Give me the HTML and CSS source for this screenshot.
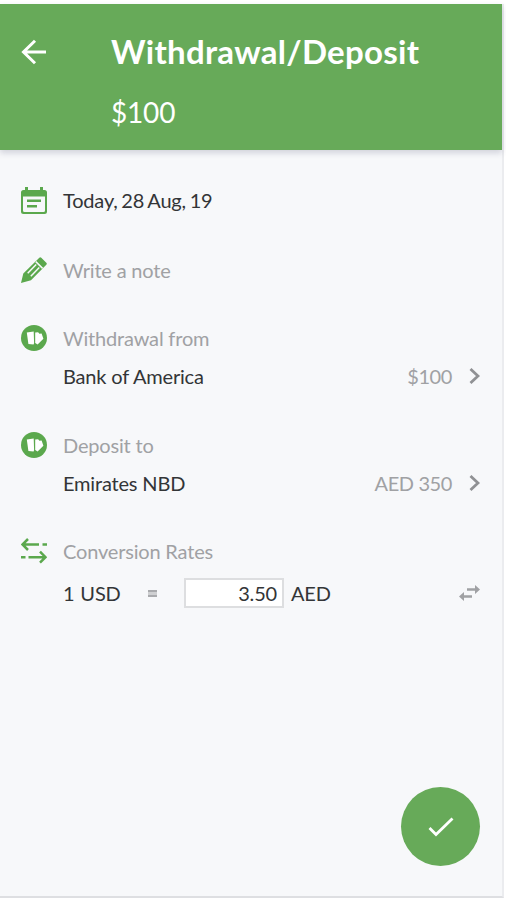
FILE: index.html
```html
<!DOCTYPE html>
<html lang="en">
<head>
	<meta charset="UTF-8">
	<title>Withdrawal/Deposit</title>
	<link rel="stylesheet" href="styles.css">
</head>
<body>
	<div class="screen">
		<!-- header -->
		<div class="header">
			<svg class="back" width="26" height="26" viewBox="0 0 26 26"><path d="M14 1.800L2.500 13l11.500 11.200M2.500 13H25"/></svg>
			<div class="heading">
				<h1>Withdrawal/Deposit</h1>
				<p class="total">$100</p>
			</div>
		</div>

		<!-- form -->
		<div class="content">
			<div class="item date">
				<svg class="icon" width="26" height="28" viewBox="0 0 26 28">
					<path class="fill" fill-rule="evenodd" d="M4 0h3v3h12V0h3v3h1.500a2.500 2.500 0 0 1 2.500 2.500v19a2.500 2.500 0 0 1-2.500 2.500h-21A2.500 2.500 0 0 1 0 24.500v-19A2.500 2.500 0 0 1 2.500 3H4zM2 9.500v14q0 1.500 1.500 1.500h19q1.500 0 1.500-1.500v-14z"/>
					<path class="line" d="M6 13.800h14M6 19.200h10"/>
				</svg>
				<div class="text">Today, 28 Aug, 19</div>
			</div>
			<div class="item note">
				<svg class="icon" width="26" height="26" viewBox="0 0 26 26">
					<path class="fill" d="M18.300.7q1-1 2 0l5 5q1 1 0 2L10 23.300 0 26l2.300-9.500z"/>
					<path class="gap" d="M14.800 4.600l6.800 6.800M6.700 16.300l8.500-8.700M9.800 19.300l8.500-8.700"/>
				</svg>
				<div class="text label">Write a note</div>
			</div>
			<div class="item from">
				<svg class="icon" width="26" height="26" viewBox="0 0 26 26">
					<circle class="fill" cx="13" cy="13" r="13"/>
					<path class="card" d="M5.800 7.500l6.900-.9.400 11.400-.5 1.500-5.200-.6zM14.200 7.500l2.900-.3 1.300 1.600 2.200-.4 1.800 5.400-5.800 5.800-2.400-1.600z"/>
				</svg>
				<div class="text label">Withdrawal from</div>
				<div class="account">
					<span>Bank of America</span>
					<span class="amount">$100</span>
					<svg class="chevron" width="11" height="18" viewBox="0 0 11 18"><path d="M1.500 2l7.500 7-7.500 7"/></svg>
				</div>
			</div>
			<div class="item to">
				<svg class="icon" width="26" height="26" viewBox="0 0 26 26">
					<circle class="fill" cx="13" cy="13" r="13"/>
					<path class="card" d="M5.800 7.500l6.900-.9.400 11.400-.5 1.500-5.200-.6zM14.200 7.500l2.900-.3 1.300 1.600 2.200-.4 1.800 5.400-5.800 5.800-2.400-1.600z"/>
				</svg>
				<div class="text label">Deposit to</div>
				<div class="account">
					<span>Emirates NBD</span>
					<span class="amount">AED 350</span>
					<svg class="chevron" width="11" height="18" viewBox="0 0 11 18"><path d="M1.500 2l7.500 7-7.500 7"/></svg>
				</div>
			</div>
			<div class="item rates">
				<svg class="icon" width="26" height="26" viewBox="0 0 26 26">
					<path class="line" d="M7 1L1.500 6.500 7 12M2 6.500h16M21.500 6.500H26M19 13.700l5.500 5.500-5.500 5.500M24 19.200H7.500M0 19.200h4.500"/>
				</svg>
				<div class="text label">Conversion Rates</div>
				<div class="rate">
					<span class="base">1 USD</span>
					<span class="equal"></span>
					<input type="text" value="3.50">
					<span>AED</span>
					<svg class="swap" width="21" height="16" viewBox="0 0 21 16">
						<path class="shaft" d="M8 4.500h9M4 11.500h9"/>
						<path class="head" d="M16 0l5 4.500L16 9zM5 7l-5 4.500L5 16z"/>
					</svg>
				</div>
			</div>
		</div>

		<button class="done">
			<svg width="26" height="20" viewBox="0 0 26 20"><path d="M1.500 11l6.500 6.500L24.500 1.500"/></svg>
		</button>
	</div>
</body>
</html>
```
FILE: styles.css
```css
*{
	margin:0;
	padding:0;
	box-sizing: border-box;
}
body{
	background-color: #fff;
	padding-top: 4px;
	font-family: Lato, "Open Sans", sans-serif;
	font-size: 20px;
	line-height: 28px;
	letter-spacing: -.18px;
	color: #333537;
}
.screen{
	display: flex;
	flex-direction: column;
	width: 504px;
	height: 894px;
	background-color: #f7f8fa;
	border-right: 2px solid #ebecef;
	border-bottom: 2px solid #dedfe2;
}
/* header */
.header{
	display: flex;
	height: 146px;
	padding: 23px 0 0 21px;
	background-color: #67aa59;
	color: #fff;
	box-shadow: 0 3px 6px rgba(60,60,100,.2);
}
.back{
	margin-top: 12px;
	fill: none;
	stroke: #fff;
	stroke-width: 3;
}
.heading{
	margin-left: 64px;
}
h1{
	font-size: 33px;
	line-height: 48px;
	font-weight: bold;
	letter-spacing: .28px;
}
.total{
	margin-top: 18px;
	font-size: 28px;
	line-height: 38px;
}
/* form */
.content{
	flex: 1;
	padding: 37px 22px 0 21px;
}
.item{
	display: grid;
	grid-template-columns: 26px 1fr;
	column-gap: 16px;
	align-items: center;
}
.icon{
	display: block;
}
.icon .fill{
	fill: #5ba84d;
}
.icon .line{
	fill: none;
	stroke: #5ba84d;
	stroke-width: 2.500;
}
.icon .gap{
	fill: none;
	stroke: #f7f8fa;
	stroke-width: 1.500;
}
.icon .card{
	fill: #fff;
}
.label{
	color: #a0a1a4;
}
.date .text{
	margin-top: -2px;
	word-spacing: -1.200px;
}
.note{
	margin-top: 41px;
}
.from{
	margin-top: 40px;
}
.to{
	margin-top: 41px;
}
.rates{
	margin-top: 40px;
}
.account{
	grid-column: 2;
	display: flex;
	align-items: center;
	margin-top: 10px;
}
.amount{
	margin-left: auto;
	margin-right: 17px;
	letter-spacing: -.4px;
	color: #a0a1a4;
}
.chevron{
	fill: none;
	stroke: #909194;
	stroke-width: 2.800;
}
.rate{
	grid-column: 2;
	display: flex;
	align-items: center;
	margin-top: 13px;
}
.base{
	width: 85px;
	word-spacing: 1px;
}
.equal{
	width: 9px;
	height: 7px;
	border-top: 2px solid #a9aaad;
	border-bottom: 2px solid #a9aaad;
	background-color: #cfd0d2;
}
.rate input{
	width: 100px;
	height: 30px;
	margin: 0 7px 0 27px;
	padding: 0 5px;
	border: 2px solid #dddee0;
	background-color: #fff;
	font: inherit;
	letter-spacing: inherit;
	color: inherit;
	text-align: right;
}
.swap{
	margin-left: auto;
}
.swap .shaft{
	stroke: #a0a1a4;
	stroke-width: 2.500;
}
.swap .head{
	fill: #a0a1a4;
}
/* confirm button */
.done{
	align-self: flex-end;
	display: flex;
	align-items: center;
	justify-content: center;
	width: 79px;
	height: 79px;
	margin: 0 22px 30px 0;
	border: none;
	border-radius: 50%;
	background-color: #67aa59;
}
.done svg{
	margin-top: 1px;
	fill: none;
	stroke: #fff;
	stroke-width: 2.800;
}
```
